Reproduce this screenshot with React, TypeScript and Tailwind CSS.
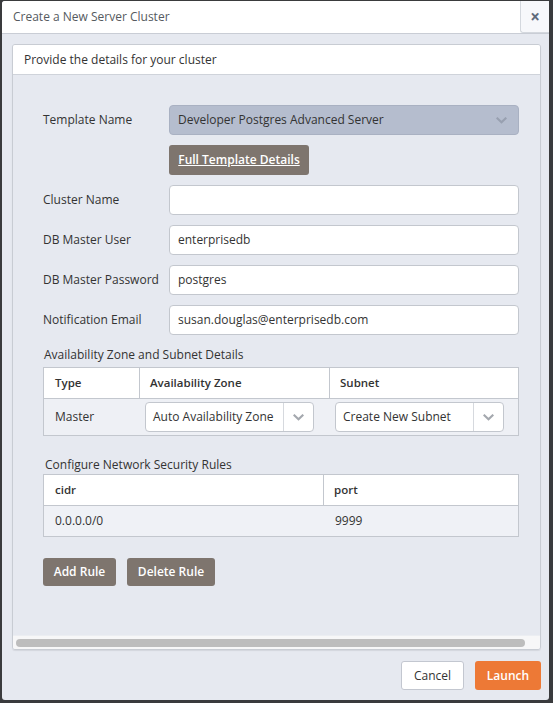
import React from "react";

const Chevron = ({ color = "#9aa0aa" }: { color?: string }) => (
  <svg width="11" height="7" viewBox="0 0 11 7" fill="none">
    <polyline points="1.5,1.5 5.5,5.2 9.5,1.5" stroke={color} strokeWidth="2.2" strokeLinecap="square" />
  </svg>
);

const Input = ({ value }: { value: string }) => (
  <div className="h-[30px] w-[350px] bg-white border border-[#c3c7ce] rounded-[4px] flex items-center px-[8px] text-[12px] text-[#333]">
    {value}
  </div>
);

const Row = ({ label, children }: { label: string; children: React.ReactNode }) => (
  <div className="flex items-center mt-[10px]">
    <div className="w-[126px] text-[12px] text-[#333]">{label}</div>
    {children}
  </div>
);

const TableSelect = ({ value }: { value: string }) => (
  <div className="h-[30px] w-[169px] bg-white border border-[#c3c7ce] rounded-[4px] flex items-center">
    <div className="flex-1 px-[7px] text-[12px] text-[#333] whitespace-nowrap">{value}</div>
    <div className="w-[30px] h-[28px] border-l border-[#d6d9de] flex items-center justify-center">
      <Chevron color="#a4a8ae" />
    </div>
  </div>
);

export default function App() {
  return (
    <div
      className="w-[553px] h-[703px] bg-[#3a3b3d] overflow-hidden"
      style={{ fontFamily: "'Open Sans', 'Noto Sans', sans-serif" }}
    >
      <div className="ml-[2px] mt-px w-[547px] h-[699px] bg-[#e6e9f0] rounded-[3px] flex flex-col">
        {/* header */}
        <div className="h-[33px] bg-white border-b border-[#c9cdd5] flex rounded-t-[3px]">
          <div className="flex-1 flex items-center pl-[11px] text-[12px] text-[#555a60]">
            Create a New Server Cluster
          </div>
          <div className="w-[29px] h-[32px] bg-[#f7f8fb] border-l border-b border-[#d4d8de] rounded-bl-[3px] flex items-center justify-center text-[#5f6b7c] text-[17px] font-bold leading-none">
            ×
          </div>
        </div>

        {/* panel */}
        <div className="ml-[10px] mt-[10px] w-[529px] h-[606px] border border-[#c8ccd3] rounded-[3px] flex flex-col overflow-hidden shadow-[0_1px_1px_rgba(0,0,0,0.08)]">
          <div className="h-[30px] bg-white border-b border-[#cfd3da] flex items-center pl-[11px] text-[12px] text-[#333]">
            Provide the details for your cluster
          </div>
          <div className="flex-1 pl-[30px] pt-[20px]">
            <Row label="Template Name">
              <div className="h-[30px] w-[350px] bg-[#b5bdce] border border-[#a9b1c2] rounded-[4px] flex items-center px-[8px] text-[12px] text-[#333]">
                <div className="flex-1">Developer Postgres Advanced Server</div>
                <div className="mr-[3px]">
                  <Chevron color="#98a0b0" />
                </div>
              </div>
            </Row>
            <div className="flex mt-[10px] pl-[126px]">
              <div className="h-[30px] w-[140px] bg-[#7e756e] rounded-[3px] flex items-center justify-center text-[12px] font-semibold text-white underline">
                Full Template Details
              </div>
            </div>
            <Row label="Cluster Name">
              <Input value="" />
            </Row>
            <Row label="DB Master User">
              <Input value="enterprisedb" />
            </Row>
            <Row label="DB Master Password">
              <Input value="postgres" />
            </Row>
            <Row label="Notification Email">
              <Input value="susan.douglas@enterprisedb.com" />
            </Row>

            <div className="mt-[11px] h-[18px] leading-[18px] text-[12px] text-[#333] pl-px">
              Availability Zone and Subnet Details
            </div>
            <div className="mt-[3px] w-[476px] border border-[#c3c7ce]">
              <div className="h-[31px] bg-white flex text-[11.5px] font-semibold text-[#333] border-b border-[#c3c7ce]">
                <div className="w-[96px] border-r border-[#c3c7ce] flex items-center pl-[11px]">Type</div>
                <div className="w-[190px] border-r border-[#c3c7ce] flex items-center pl-[10px]">Availability Zone</div>
                <div className="flex-1 flex items-center pl-[10px]">Subnet</div>
              </div>
              <div className="h-[36px] bg-[#eef0f5] flex items-center text-[12px] text-[#333]">
                <div className="w-[101px] pl-[11px]">Master</div>
                <TableSelect value="Auto Availability Zone" />
                <div className="w-[21px]" />
                <TableSelect value="Create New Subnet" />
              </div>
            </div>

            <div className="mt-[20px] h-[18px] leading-[18px] text-[12px] text-[#333] pl-[2px]">
              Configure Network Security Rules
            </div>
            <div className="w-[476px] border border-[#c3c7ce]">
              <div className="h-[31px] bg-white flex text-[11.5px] font-semibold text-[#333] border-b border-[#c3c7ce]">
                <div className="w-[280px] border-r border-[#c3c7ce] flex items-center pl-[11px]">cidr</div>
                <div className="flex-1 flex items-center pl-[10px]">port</div>
              </div>
              <div className="h-[30px] bg-[#eff1f6] flex items-center text-[12px] text-[#333]">
                <div className="w-[281px] pl-[11px]">0.0.0.0/0</div>
                <div className="flex-1 pl-[10px]">9999</div>
              </div>
            </div>

            <div className="mt-[21px] flex gap-[11px]">
              <div className="h-[28px] w-[73px] bg-[#7e756e] rounded-[3px] flex items-center justify-center text-[12px] font-semibold text-white">
                Add Rule
              </div>
              <div className="h-[28px] w-[88px] bg-[#7e756e] rounded-[3px] flex items-center justify-center text-[12px] font-semibold text-white">
                Delete Rule
              </div>
            </div>
          </div>
          <div className="h-[14px] bg-[#f7f7f8] border-t border-[#eceef2] flex items-center pl-[3px]">
            <div className="h-[8px] w-[509px] rounded-full bg-[#bdbdbd]" />
          </div>
        </div>

        {/* footer */}
        <div className="flex justify-end gap-[11px] mt-[11px] pr-[8px]">
          <div className="h-[29px] w-[63px] bg-white border border-[#c3c7d0] rounded-[3px] flex items-center justify-center text-[12px] text-[#333]">
            Cancel
          </div>
          <div className="h-[29px] w-[66px] bg-[#ed7936] rounded-[3px] flex items-center justify-center text-[12px] font-semibold text-white">
            Launch
          </div>
        </div>
      </div>
    </div>
  );
}
